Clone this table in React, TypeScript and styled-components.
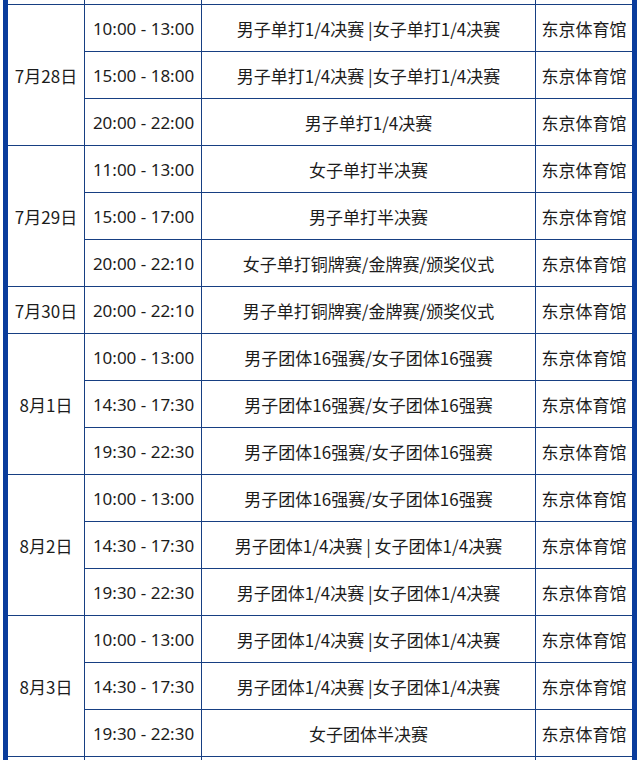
import React from "react";
import styled, { createGlobalStyle } from "styled-components";

const GlobalStyle = createGlobalStyle`
    html, body {
        margin: 0;
        padding: 0;
        background: #ffffff;
    }
`;

const LINE = "#173f82";

const Frame = styled.div`
    width: 624px;
    height: 760px;
    margin-left: 3px;
    border-left: 5px solid #0a3c9c;
    border-right: 5px solid #0a3c9c;
    overflow: hidden;
    background: #ffffff;
`;

const Table = styled.table`
    width: 624px;
    border-spacing: 0;
    table-layout: fixed;
    font-family: "Noto Sans CJK SC", "Microsoft YaHei", sans-serif;
    font-size: 17px;
    color: #1c1c1c;
`;

const Col = styled.col<{ $w: number }>`
    width: ${(p) => p.$w}px;
`;

const Cell = styled.td<{ $last?: boolean }>`
    height: 46px;
    padding: 0;
    text-align: center;
    vertical-align: middle;
    white-space: nowrap;
    border-bottom: 1px solid ${LINE};
    border-right: ${(p) => (p.$last ? "none" : `1px solid ${LINE}`)};
`;

// the time column uses wider latin digits, as in the source
const TimeCell = styled(Cell)`
    font-family: "Noto Sans", "Noto Sans CJK SC", sans-serif;
    padding-left: 1px;
`;

// thin slivers of the rows above and below the visible part
const EdgeCell = styled.td<{ $last?: boolean; $h: number }>`
    height: ${(p) => p.$h}px;
    padding: 0;
    line-height: 0;
    font-size: 0;
    border-bottom: 1px solid ${LINE};
    border-right: ${(p) => (p.$last ? "none" : `1px solid ${LINE}`)};
`;

interface Slot {
    time: string;
    event: string;
}

interface Day {
    date: string;
    slots: Slot[];
}

const VENUE = "东京体育馆";
const widths = [77, 117, 334, 96];

const days: Day[] = [
    {
        date: "7月28日",
        slots: [
            { time: "10:00 - 13:00", event: "男子单打1/4决赛 |女子单打1/4决赛" },
            { time: "15:00 - 18:00", event: "男子单打1/4决赛 |女子单打1/4决赛" },
            { time: "20:00 - 22:00", event: "男子单打1/4决赛" },
        ],
    },
    {
        date: "7月29日",
        slots: [
            { time: "11:00 - 13:00", event: "女子单打半决赛" },
            { time: "15:00 - 17:00", event: "男子单打半决赛" },
            { time: "20:00 - 22:10", event: "女子单打铜牌赛/金牌赛/颁奖仪式" },
        ],
    },
    {
        date: "7月30日",
        slots: [{ time: "20:00 - 22:10", event: "男子单打铜牌赛/金牌赛/颁奖仪式" }],
    },
    {
        date: "8月1日",
        slots: [
            { time: "10:00 - 13:00", event: "男子团体16强赛/女子团体16强赛" },
            { time: "14:30 - 17:30", event: "男子团体16强赛/女子团体16强赛" },
            { time: "19:30 - 22:30", event: "男子团体16强赛/女子团体16强赛" },
        ],
    },
    {
        date: "8月2日",
        slots: [
            { time: "10:00 - 13:00", event: "男子团体16强赛/女子团体16强赛" },
            { time: "14:30 - 17:30", event: "男子团体1/4决赛 | 女子团体1/4决赛" },
            { time: "19:30 - 22:30", event: "男子团体1/4决赛 |女子团体1/4决赛" },
        ],
    },
    {
        date: "8月3日",
        slots: [
            { time: "10:00 - 13:00", event: "男子团体1/4决赛 |女子团体1/4决赛" },
            { time: "14:30 - 17:30", event: "男子团体1/4决赛 |女子团体1/4决赛" },
            { time: "19:30 - 22:30", event: "女子团体半决赛" },
        ],
    },
];

function EdgeRow({ h }: { h: number }) {
    return (
        <tr>
            {widths.map((w, i) => (
                <EdgeCell key={w} $h={h} $last={i === widths.length - 1} />
            ))}
        </tr>
    );
}

function App() {
    return (
        <>
            <GlobalStyle />
            <Frame>
                <Table>
                    <colgroup>
                        {widths.map((w) => (
                            <Col key={w} $w={w} />
                        ))}
                    </colgroup>
                    <tbody>
                        <EdgeRow h={4} />
                        {days.map((day) =>
                            day.slots.map((slot, i) => (
                                <tr key={day.date + slot.time}>
                                    {i === 0 && (
                                        <Cell rowSpan={day.slots.length}>{day.date}</Cell>
                                    )}
                                    <TimeCell>{slot.time}</TimeCell>
                                    <Cell>{slot.event}</Cell>
                                    <Cell $last>{VENUE}</Cell>
                                </tr>
                            ))
                        )}
                        <EdgeRow h={10} />
                    </tbody>
                </Table>
            </Frame>
        </>
    );
}

export default App;
